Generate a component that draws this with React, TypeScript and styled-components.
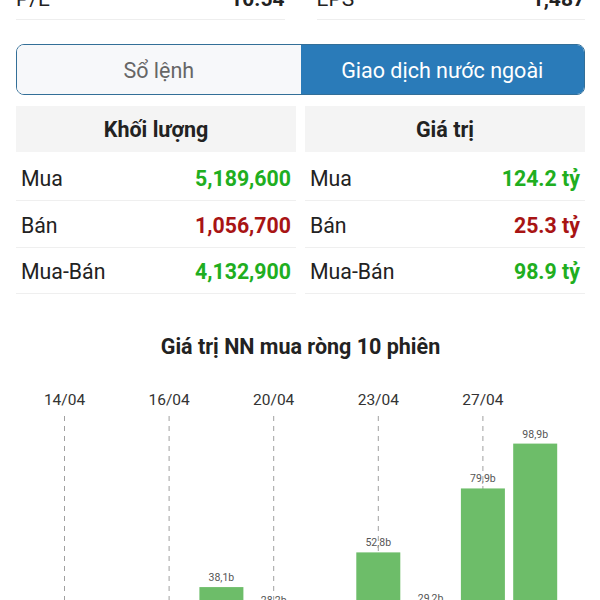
import React from "react";
import styled, { createGlobalStyle } from "styled-components";

const Global = createGlobalStyle`
  html, body { margin: 0; padding: 0; background: #ffffff; }
  body { font-family: Roboto, "Noto Sans", "Liberation Sans", sans-serif; color: #222; }
  #root { overflow: hidden; height: 600px; }
`;

const Page = styled.div`
  padding: 0 15px 0 16px;
`;

const StatsRow = styled.div`
  display: grid;
  grid-template-columns: 1fr 1fr;
  column-gap: 32px;
  margin-top: -22px;
`;

const StatCell = styled.div`
  display: flex;
  justify-content: space-between;
  align-items: center;
  height: 41px;
  border-bottom: 1px solid #eeeeee;
  font-size: 21px;
  color: #222;
`;

const StatValue = styled.span`
  font-weight: 700;
`;

const Segmented = styled.div`
  display: grid;
  grid-template-columns: 1fr 1fr;
  margin-top: 24px;
  height: 51px;
  box-sizing: border-box;
  border: 1.5px solid #336f98;
  border-radius: 8px;
  overflow: hidden;
`;

const Segment = styled.div<{ $active?: boolean }>`
  display: flex;
  align-items: center;
  justify-content: center;
  padding-top: 2px;
  font-size: 21.5px;
  background: ${(p) => (p.$active ? "#2a7bb9" : "#f7f8fa")};
  color: ${(p) => (p.$active ? "#ffffff" : "#666666")};
`;

const Tables = styled.div`
  display: grid;
  grid-template-columns: 280px 280px;
  column-gap: 9px;
  margin-top: 11px;
`;

const Column = styled.div`
  display: flex;
  flex-direction: column;
`;

const Header = styled.div`
  height: 46px;
  display: flex;
  align-items: center;
  justify-content: center;
  background: #f4f4f4;
  font-size: 21.5px;
  font-weight: 700;
  color: #222;
`;

const Row = styled.div<{ $h: number }>`
  height: ${(p) => p.$h}px;
  box-sizing: border-box;
  display: flex;
  align-items: flex-end;
  justify-content: space-between;
  padding: 0 5px 9px;
  border-bottom: 1px solid #efefef;
  font-size: 21.3px;
  color: #222;
`;

const Value = styled.span<{ $tone: "up" | "down" }>`
  font-weight: 700;
  color: ${(p) => (p.$tone === "up" ? "#20ae20" : "#a81414")};
`;

const Title = styled.div`
  margin-top: 38px;
  height: 30px;
  line-height: 30px;
  text-align: center;
  font-size: 21.5px;
  font-weight: 700;
  color: #222;
`;

const ChartBox = styled.div`
  margin: 1px -15px 0 -16px;
`;

type Rec = { label: string; value: string; tone: "up" | "down" };

const heights = [49, 47, 46];

const vol: Rec[] = [
  { label: "Mua", value: "5,189,600", tone: "up" },
  { label: "Bán", value: "1,056,700", tone: "down" },
  { label: "Mua-Bán", value: "4,132,900", tone: "up" },
];
const val: Rec[] = [
  { label: "Mua", value: "124.2 tỷ", tone: "up" },
  { label: "Bán", value: "25.3 tỷ", tone: "down" },
  { label: "Mua-Bán", value: "98.9 tỷ", tone: "up" },
];

const sessions = [
  { date: "14/04", v: 10.4 },
  { date: "15/04", v: 6.2 },
  { date: "16/04", v: 12.7 },
  { date: "19/04", v: 38.1 },
  { date: "20/04", v: 28.2 },
  { date: "21/04", v: 18.6 },
  { date: "23/04", v: 52.8 },
  { date: "26/04", v: 29.2 },
  { date: "27/04", v: 79.9 },
  { date: "28/04", v: 98.9 },
];

const Chart: React.FC = () => {
  const base = 314;
  const k = 2.36;
  const cx = (i: number) => 64.5 + 52.3 * i;
  return (
    <svg width="600" height="320" viewBox="0 0 600 320">
      {sessions.map((s, i) =>
        i % 2 === 0 ? (
          <text
            key={"d" + i}
            x={cx(i)}
            y={42}
            textAnchor="middle"
            fontSize="15.5"
            fill="#333"
            fontFamily="Roboto, sans-serif"
          >
            {s.date}
          </text>
        ) : null
      )}
      {sessions.map((s, i) => (
        <text
          key={"l" + i}
          x={cx(i)}
          y={base - k * s.v - 6}
          textAnchor="middle"
          fontSize="10.5"
          fill="#555"
          fontFamily="Roboto, sans-serif"
        >
          {s.v.toFixed(1).replace(".", ",")}b
        </text>
      ))}
      {sessions.map((s, i) =>
        i % 2 === 0 ? (
          <line
            key={"g" + i}
            x1={cx(i)}
            x2={cx(i)}
            y1={53}
            y2={320}
            stroke="#a0a0a0"
            strokeWidth="1"
            strokeDasharray="5 5"
          />
        ) : null
      )}
      {sessions.map((s, i) => (
        <rect
          key={"b" + i}
          x={cx(i) - 22}
          y={base - k * s.v}
          width={44}
          height={k * s.v}
          fill="#6dbd69"
        />
      ))}
    </svg>
  );
};

export default function App() {
  return (
    <Page>
      <Global />
      <StatsRow>
        <StatCell>
          <span>P/E</span>
          <StatValue>10.54</StatValue>
        </StatCell>
        <StatCell>
          <span>EPS</span>
          <StatValue>1,487</StatValue>
        </StatCell>
      </StatsRow>
      <Segmented>
        <Segment>Sổ lệnh</Segment>
        <Segment $active>Giao dịch nước ngoài</Segment>
      </Segmented>
      <Tables>
        <Column>
          <Header>Khối lượng</Header>
          {vol.map((r, i) => (
            <Row key={r.label} $h={heights[i]}>
              <span>{r.label}</span>
              <Value $tone={r.tone}>{r.value}</Value>
            </Row>
          ))}
        </Column>
        <Column>
          <Header>Giá trị</Header>
          {val.map((r, i) => (
            <Row key={r.label} $h={heights[i]}>
              <span>{r.label}</span>
              <Value $tone={r.tone}>{r.value}</Value>
            </Row>
          ))}
        </Column>
      </Tables>
      <Title>Giá trị NN mua ròng 10 phiên</Title>
      <ChartBox>
        <Chart />
      </ChartBox>
    </Page>
  );
}
